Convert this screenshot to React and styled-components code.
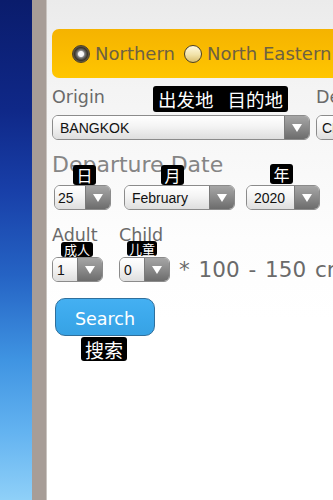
import React from "react";
import styled, { createGlobalStyle } from "styled-components";

const Global = createGlobalStyle`
  html, body { margin: 0; padding: 0; }
  body { width: 333px; height: 500px; overflow: hidden; background: #fff; }
  * { box-sizing: border-box; }
`;

const Page = styled.div`
  display: flex;
  width: 333px;
  height: 500px;
  overflow: hidden;
  font-family: "DejaVu Sans", Verdana, sans-serif;
`;

const BlueStrip = styled.div`
  width: 32px;
  flex: none;
  background: linear-gradient(180deg, #0a1c6c 0%, #0f2888 22%, #183fa8 38%, #2563c4 55%, #3f94e2 72%, #62b2f0 86%, #8fd0f8 100%);
`;

const GreyStrip = styled.div`
  width: 15px;
  flex: none;
  background: #a79d97;
  border-right: 1px solid #c9c4c0;
`;

const Content = styled.div`
  flex: 1;
  min-width: 0;
  overflow: hidden;
  padding-left: 5px;
  background: linear-gradient(180deg, #ebebeb 0px, #f4f4f4 90px, #fdfdfd 240px, #ffffff 320px);
  white-space: nowrap;
`;

const Title = styled.div`
  font-size: 22px;
  line-height: 24px;
  height: 24px;
  margin-top: -24px;
  color: #444;
`;

const RegionBox = styled.div`
  margin-top: 29px;
  width: 320px;
  height: 49px;
  border-radius: 7px 0 0 7px;
  background: linear-gradient(180deg, #f5b300 0%, #fbbe00 60%, #ffc600 100%);
  display: flex;
  align-items: center;
  padding-left: 20px;
  gap: 9px;
`;

const RadioItem = styled.label`
  display: flex;
  align-items: center;
  gap: 5px;
  font-size: 18px;
  color: #6e6142;
`;

const RadioDot = styled.span`
  width: 18px;
  height: 18px;
  border-radius: 50%;
  flex: none;
  border: 1px solid #4a3f28;
  background: ${(p) =>
    p.$checked
      ? "radial-gradient(circle at 50% 50%, #ffffff 0, #f4f4f4 2.6px, #8a8a8a 3.6px, #5c5a55 5px, #3b3529 6.5px, #6b604a 8px)"
      : "linear-gradient(180deg, #fff9e0 0%, #f1e2a8 55%, #d8bd6c 100%)"};
`;

const FieldRow = styled.div`
  position: relative;
  display: flex;
  gap: 6px;
  margin-top: ${(p) => p.$mt || 0}px;
`;

const Column = styled.div`
  display: flex;
  flex-direction: column;
  flex: none;
`;

const Label = styled.div`
  font-size: 17.5px;
  line-height: 20px;
  color: #6a6a6a;
  margin-bottom: ${(p) => p.$mb || 0}px;
`;

const BigLabel = styled.div`
  font-size: 22px;
  line-height: 26px;
  color: #858585;
  margin-top: 11.5px;
`;

const Tip = styled.div`
  position: absolute;
  background: #000;
  color: #fff;
  font-family: "Noto Sans CJK SC", "DejaVu Sans", sans-serif;
  border-radius: 3px;
  display: flex;
  align-items: center;
  justify-content: center;
  white-space: nowrap;
  z-index: 2;
`;

const PlaceTip = styled(Tip)`
  left: 101px;
  top: -1px;
  height: 26px;
  padding: 0 5px;
  font-size: 18.5px;
  gap: 14px;
`;

const SmallTip = styled(Tip)`
  left: ${(p) => p.$left}px;
  bottom: 100%;
  width: ${(p) => p.$w || 23}px;
  height: ${(p) => p.$h || 20}px;
  font-size: ${(p) => p.$fs || 16}px;
  margin-bottom: ${(p) => p.$gap || 0}px;
`;

const SelectBox = styled.div`
  position: relative;
  flex: none;
  display: flex;
  width: ${(p) => p.$w}px;
  height: 25px;
  border: 1px solid #8b8b8b;
  border-radius: 6px;
  overflow: hidden;
  font-family: "Liberation Sans", Arial, sans-serif;
  font-size: 14px;
  color: #111;
  margin-left: ${(p) => p.$ml || 0}px;
`;

const SelectValue = styled.div`
  flex: 1;
  display: flex;
  align-items: center;
  padding-left: ${(p) => p.$pl ?? 7}px;
  background: linear-gradient(180deg, #ffffff 0%, #f4f4f4 45%, #dedede 100%);
  overflow: hidden;
`;

const SelectArrow = styled.div`
  width: 25px;
  flex: none;
  display: flex;
  align-items: center;
  justify-content: center;
  border-left: 1px solid #7a7a7a;
  background: linear-gradient(180deg, #a6a6a6 0%, #8a8a8a 50%, #6c6c6c 100%);
  &::after {
    content: "";
    width: 0;
    height: 0;
    border-left: 5px solid transparent;
    border-right: 5px solid transparent;
    border-top: 8px solid #fff;
    margin-top: 1px;
  }
`;

const DateRow = styled.div`
  display: flex;
  align-items: center;
  margin-top: 7.5px;
`;

const Slot = styled.div`
  position: relative;
  display: flex;
  margin-right: ${(p) => p.$mr || 0}px;
`;

const PaxLabels = styled.div`
  display: flex;
  margin-top: 14.5px;
`;

const PaxLabel = styled(Label)`
  width: ${(p) => p.$w}px;
`;

const PaxRow = styled.div`
  display: flex;
  align-items: center;
  margin-top: 12.5px;
`;

const Note = styled.div`
  font-size: 21.5px;
  word-spacing: 2px;
  color: #6a6a6a;
  margin-left: 9px;
`;

const ButtonWrap = styled.div`
  position: relative;
  display: inline-flex;
  margin-top: 16px;
  margin-left: 3px;
`;

const SearchButton = styled.button`
  width: 100px;
  height: 38px;
  border-radius: 10px;
  border: 1px solid #2f6f9c;
  background: linear-gradient(180deg, #44b0f2 0%, #3ca9ec 50%, #37a2e4 100%);
  color: #fff;
  font-family: "DejaVu Sans", Verdana, sans-serif;
  font-size: 17.5px;
  padding: 3px 0 0 0;
`;

const SearchTip = styled(Tip)`
  top: 100%;
  left: 26px;
  margin-top: 1px;
  width: 46px;
  height: 24px;
  font-size: 19px;
`;

function Select({ w, value, pl, ml }) {
  return (
    <SelectBox $w={w} $ml={ml}>
      <SelectValue $pl={pl}>{value}</SelectValue>
      <SelectArrow />
    </SelectBox>
  );
}

export default function App() {
  return (
    <>
      <Global />
      <Page>
        <BlueStrip />
        <GreyStrip />
        <Content>
          <Title>Journey planning</Title>
          <RegionBox>
            <RadioItem>
              <RadioDot $checked />
              Northern
            </RadioItem>
            <RadioItem>
              <RadioDot />
              North Eastern
            </RadioItem>
          </RegionBox>

          <FieldRow $mt={8.5}>
            <Column>
              <Label $mb={8.5}>Origin</Label>
              <Select w={258} value="BANGKOK" pl={7} />
            </Column>
            <Column>
              <Label $mb={8.5}>Destination</Label>
              <Select w={120} value="CHIANG MAI" pl={5} />
            </Column>
            <PlaceTip>
              <span>出发地</span>
              <span>目的地</span>
            </PlaceTip>
          </FieldRow>

          <BigLabel>Departure Date</BigLabel>
          <DateRow>
            <Slot $mr={13}>
              <Select w={57} value="25" pl={3} ml={2} />
              <SmallTip $left={21}>日</SmallTip>
            </Slot>
            <Slot $mr={11}>
              <Select w={111} value="February" pl={7} />
              <SmallTip $left={37}>月</SmallTip>
            </Slot>
            <Slot>
              <Select w={74} value="2020" pl={7} />
              <SmallTip $left={24} $gap={1}>年</SmallTip>
            </Slot>
          </DateRow>

          <PaxLabels>
            <PaxLabel $w={67}>Adult</PaxLabel>
            <PaxLabel $w={60}>Child</PaxLabel>
          </PaxLabels>
          <PaxRow>
            <Slot $mr={16}>
              <Select w={51} value="1" pl={4} />
              <SmallTip $left={9} $w={32} $h={15} $fs={13}>成人</SmallTip>
            </Slot>
            <Slot>
              <Select w={51} value="0" pl={4} />
              <SmallTip $left={8} $w={30} $h={15} $fs={13} $gap={1}>儿童</SmallTip>
            </Slot>
            <Note>* 100 - 150 cm</Note>
          </PaxRow>

          <ButtonWrap>
            <SearchButton>Search</SearchButton>
            <SearchTip>搜索</SearchTip>
          </ButtonWrap>
        </Content>
      </Page>
    </>
  );
}
